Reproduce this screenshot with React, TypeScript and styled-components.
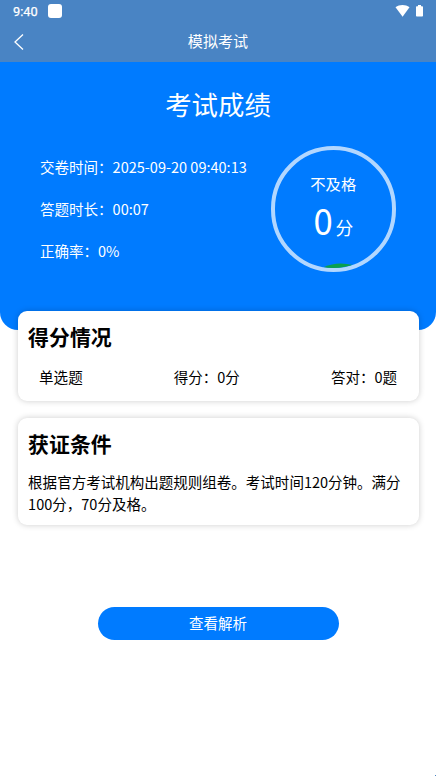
import React from 'react';
import styled, { createGlobalStyle } from 'styled-components';

const GlobalStyle = createGlobalStyle`
  * { box-sizing: border-box; }
  body {
    margin: 0;
    background: #fff;
    color: #000;
    font-family: "Noto Sans CJK SC", sans-serif;
    font-size: 14.53px;
  }
`;

const Screen = styled.div`
  position: relative;
  width: 436px;
  height: 776px;
  overflow: hidden;
  background: #fff;
`;

const TopBar = styled.header`
  height: 62px;
  background: #4984c4;
  color: #fff;
`;

const StatusBar = styled.div`
  display: flex;
  align-items: center;
  height: 22px;
  padding: 0 12px 0 13px;
  font: 400 12.8px/22px Roboto, sans-serif;
  -webkit-text-stroke: 0.25px #fff;
`;

const Clock = styled.span`
  width: 35px;
  padding-top: 1px;
`;

const AppBadge = styled.span`
  width: 14px;
  height: 14px;
  border-radius: 3px;
  background: #fff;
`;

const StatusIcons = styled.svg`
  width: 30px;
  height: 14px;
  margin: -1px 0 0 auto;
`;

const NavBar = styled.nav`
  display: grid;
  grid-template-columns: 38px 1fr 38px;
  align-items: start;
  height: 40px;
`;

const BackIcon = styled.svg`
  width: 12px;
  height: 18px;
  margin: 11px 0 0 13px;
`;

const NavTitle = styled.h1`
  margin: 0;
  text-align: center;
  font-size: 15.1px;
  line-height: 36px;
  font-weight: 400;
`;

const Hero = styled.section`
  height: 268px;
  padding-top: 21px;
  border-radius: 0 0 18px 18px;
  background: #007bff;
  color: #fff;
`;

const HeroTitle = styled.h2`
  margin: 0;
  text-align: center;
  font-size: 26.4px;
  line-height: 42px;
  font-weight: 400;
`;

const Summary = styled.div`
  display: flex;
  justify-content: space-between;
  padding: 21px 40px 0;
`;

const Facts = styled.div`
  display: flex;
  flex-direction: column;
  line-height: 42px;
  white-space: nowrap;
`;

const ScoreRing = styled.div`
  display: flex;
  flex-direction: column;
  align-items: center;
  position: relative;
  width: 125.5px;
  height: 125.5px;
  padding-top: 21px;
  border: 4px solid #b2d7ff;
  border-radius: 50%;
  overflow: hidden;
`;

const Verdict = styled.span`
  font-size: 15.3px;
  line-height: 24px;
`;

const Score = styled.div`
  display: flex;
  align-items: baseline;
  gap: 2px;
  font-size: 17.8px;
  line-height: 49px;
`;

const ScoreNumber = styled.span`
  font-size: 36.5px;
  transform: scaleX(0.95);
`;

const Wave = styled.svg`
  position: absolute;
  left: 0;
  bottom: 0;
  width: 118px;
  height: 8px;
`;

const Cards = styled.main`
  position: relative;
  display: flex;
  flex-direction: column;
  gap: 17px;
  margin: -19px 17px 0 17.5px;
`;

const Card = styled.section<{ $height: number }>`
  height: ${({ $height }) => $height}px;
  padding: 9px 11px 0 10.6px;
  border-radius: 9px;
  background: #fff;
  box-shadow: 0 0 6px rgba(0, 0, 0, 0.2);
`;

const CardTitle = styled.h3`
  margin: 0;
  font-size: 20.9px;
  line-height: 32px;
  font-weight: 700;
`;

const ResultRow = styled.div`
  display: flex;
  justify-content: space-between;
  padding: 14px 11px 0;
  line-height: 22px;
`;

const Rules = styled.p`
  margin: 11.5px -1px 0 0;
  line-height: 22px;
`;

const ReviewButton = styled.button`
  display: block;
  width: 241px;
  height: 33px;
  margin: 82px auto 0;
  padding: 0 0 2px;
  border: 0;
  border-radius: 17px;
  background: #007bff;
  color: #fff;
  font: inherit;
  line-height: 31px;
`;

const CornerMark = styled.i`
  position: absolute;
  right: 0;
  bottom: 0;
  width: 1px;
  height: 1px;
  background: #4984c4;
`;

export default function App() {
  return (
    <Screen>
      <GlobalStyle />
      <TopBar>
        <StatusBar>
          <Clock>9:40</Clock>
          <AppBadge />
          <StatusIcons viewBox="0 0 30 14" fill="#fff">
            <path d="M1.5 3.2C5.5.2 11.5.2 15.5 3.2L8.6 12.8Z" />
            <path d="M24 1h3v1.2h1.2q.8 0 .8.8v8.7q0 .8-.8.8h-5.4q-.8 0-.8-.8V3q0-.8.8-.8H24Z" />
          </StatusIcons>
        </StatusBar>
        <NavBar>
          <BackIcon viewBox="0 0 12 18" fill="none" stroke="#fff" strokeWidth="1.3">
            <path d="M10 1.5 2 9l8 7.5" />
          </BackIcon>
          <NavTitle>模拟考试</NavTitle>
        </NavBar>
      </TopBar>
      <Hero>
        <HeroTitle>考试成绩</HeroTitle>
        <Summary>
          <Facts>
            <span>交卷时间：2025-09-20 09:40:13</span>
            <span>答题时长：00:07</span>
            <span>正确率：0%</span>
          </Facts>
          <ScoreRing>
            <Verdict>不及格</Verdict>
            <Score>
              <ScoreNumber>0</ScoreNumber>
              <span>分</span>
            </Score>
            <Wave viewBox="0 0 118 8">
              <path d="M49 7Q62 1 78 5L76 8H49Z" fill="#0aa04e" />
            </Wave>
          </ScoreRing>
        </Summary>
      </Hero>
      <Cards>
        <Card $height={90}>
          <CardTitle>得分情况</CardTitle>
          <ResultRow>
            <span>单选题</span>
            <span>得分：0分</span>
            <span>答对：0题</span>
          </ResultRow>
        </Card>
        <Card $height={107}>
          <CardTitle>获证条件</CardTitle>
          <Rules>根据官方考试机构出题规则组卷。考试时间120分钟。满分100分，70分及格。</Rules>
        </Card>
      </Cards>
      <ReviewButton>查看解析</ReviewButton>
      <CornerMark />
    </Screen>
  );
}
